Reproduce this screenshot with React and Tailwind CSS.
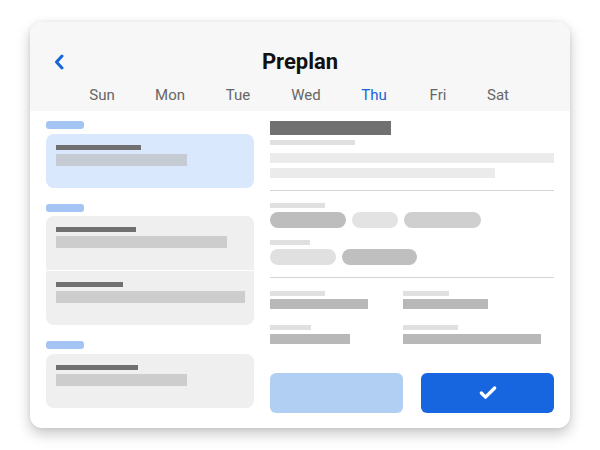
import { Check } from "lucide-react";

const DAYS = [
  { id: "Sun", w: "w-[68px]" },
  { id: "Mon", w: "w-[68px]" },
  { id: "Tue", w: "w-[68px]" },
  { id: "Wed", w: "w-[68px]" },
  { id: "Thu", w: "w-[68px]" },
  { id: "Fri", w: "w-[60px]" },
  { id: "Sat", w: "w-[60px]" },
];

function Row({ title, bar }) {
  return (
    <div className="px-[10px] pt-[11px] h-[54px]">
      <div className={`h-[5px] bg-[#707070] ${title}`} />
      <div className={`h-[12px] mt-[4px] ${bar}`} />
    </div>
  );
}

function Label() {
  return <div className="w-[38px] h-[8px] rounded-[3px] bg-[#a4c5f4]" />;
}

export default function App() {
  return (
    <div className="w-[600px] h-[450px] bg-white pt-[22px] pl-[30px]" style={{ fontFamily: "Roboto, 'Liberation Sans', sans-serif" }}>
      <div className="w-[540px] h-[406px] rounded-[12px] bg-white overflow-hidden shadow-[0_6px_14px_rgba(0,0,0,0.22),0_0_4px_rgba(0,0,0,0.08)]">
        {/* header */}
        <div className="bg-[#f7f7f7] h-[89px]">
          <div className="relative h-[56px] flex items-end justify-center pb-[1px]">
            <svg className="absolute left-[24px] top-[32px]" width="10" height="16" viewBox="0 0 10 16">
              <path d="M8 2 L2.5 8 L8 14" fill="none" stroke="#1565d8" strokeWidth="3" strokeLinecap="round" strokeLinejoin="round" />
            </svg>
            <h1 className="text-[22px] font-bold text-[#111] leading-[30px]">Preplan</h1>
          </div>
          <div className="flex pl-[38px] mt-[7px]">
            {DAYS.map((d) => (
              <div key={d.id} className={`${d.w} text-center text-[15px] leading-[20px] ${d.id === "Thu" ? "text-[#1565d8]" : "text-[#666]"}`}>
                {d.id}
              </div>
            ))}
          </div>
        </div>

        {/* body */}
        <div className="flex px-[16px] pt-[10px]">
          {/* left list */}
          <div className="w-[208px] flex flex-col">
            <Label />
            <div className="mt-[5px] rounded-[8px] bg-[#d9e8fc]">
              <Row title="w-[85px]" bar="w-[131px] bg-[#c5cbd3]" />
            </div>
            <div className="mt-[16px]"><Label /></div>
            <div className="mt-[4px] rounded-[8px] bg-[#efefef] overflow-hidden">
              <Row title="w-[80px]" bar="w-[171px] bg-[#cdcdcd]" />
              <div className="h-[1px] bg-white" />
              <Row title="w-[67px]" bar="w-[189px] bg-[#cdcdcd]" />
            </div>
            <div className="mt-[16px]"><Label /></div>
            <div className="mt-[5px] rounded-[8px] bg-[#efefef]">
              <Row title="w-[82px]" bar="w-[131px] bg-[#cdcdcd]" />
            </div>
          </div>

          {/* right detail */}
          <div className="ml-[16px] w-[284px] flex flex-col">
            <div className="w-[121px] h-[14px] bg-[#707070]" />
            <div className="w-[85px] h-[5px] mt-[5px] bg-[#e0e0e0]" />
            <div className="w-full h-[10px] mt-[8px] bg-[#ebebeb]" />
            <div className="w-[225px] h-[10px] mt-[5px] bg-[#ebebeb]" />
            <div className="h-[1px] mt-[12px] bg-[#d4d4d4]" />

            <div className="w-[55px] h-[5px] mt-[12px] bg-[#e0e0e0]" />
            <div className="flex gap-[6px] mt-[4px]">
              <div className="w-[76px] h-[16px] rounded-full bg-[#bdbdbd]" />
              <div className="w-[46px] h-[16px] rounded-full bg-[#e3e3e3]" />
              <div className="w-[77px] h-[16px] rounded-full bg-[#cfcfcf]" />
            </div>
            <div className="w-[40px] h-[5px] mt-[12px] bg-[#e0e0e0]" />
            <div className="flex gap-[6px] mt-[4px]">
              <div className="w-[66px] h-[16px] rounded-full bg-[#e0e0e0]" />
              <div className="w-[75px] h-[16px] rounded-full bg-[#bfbfbf]" />
            </div>
            <div className="h-[1px] mt-[12px] bg-[#d4d4d4]" />

            <div className="grid grid-cols-[133px_1fr] mt-[13px] gap-y-[16px]">
              <div>
                <div className="w-[55px] h-[5px] bg-[#e0e0e0]" />
                <div className="w-[98px] h-[10px] mt-[3px] bg-[#b8b8b8]" />
              </div>
              <div>
                <div className="w-[46px] h-[5px] bg-[#e0e0e0]" />
                <div className="w-[85px] h-[10px] mt-[3px] bg-[#b8b8b8]" />
              </div>
              <div>
                <div className="w-[41px] h-[5px] bg-[#e0e0e0]" />
                <div className="w-[80px] h-[10px] mt-[4px] bg-[#b8b8b8]" />
              </div>
              <div>
                <div className="w-[55px] h-[5px] bg-[#e0e0e0]" />
                <div className="w-[138px] h-[10px] mt-[4px] bg-[#b8b8b8]" />
              </div>
            </div>

            <div className="flex gap-[18px] mt-[29px]">
              <div className="w-[133px] h-[40px] rounded-[6px] bg-[#b1cef3]" />
              <div className="w-[133px] h-[40px] rounded-[6px] bg-[#1766e0] flex items-center justify-center">
                <Check size={20} strokeWidth={4} className="text-white" />
              </div>
            </div>
          </div>
        </div>
      </div>
    </div>
  );
}
